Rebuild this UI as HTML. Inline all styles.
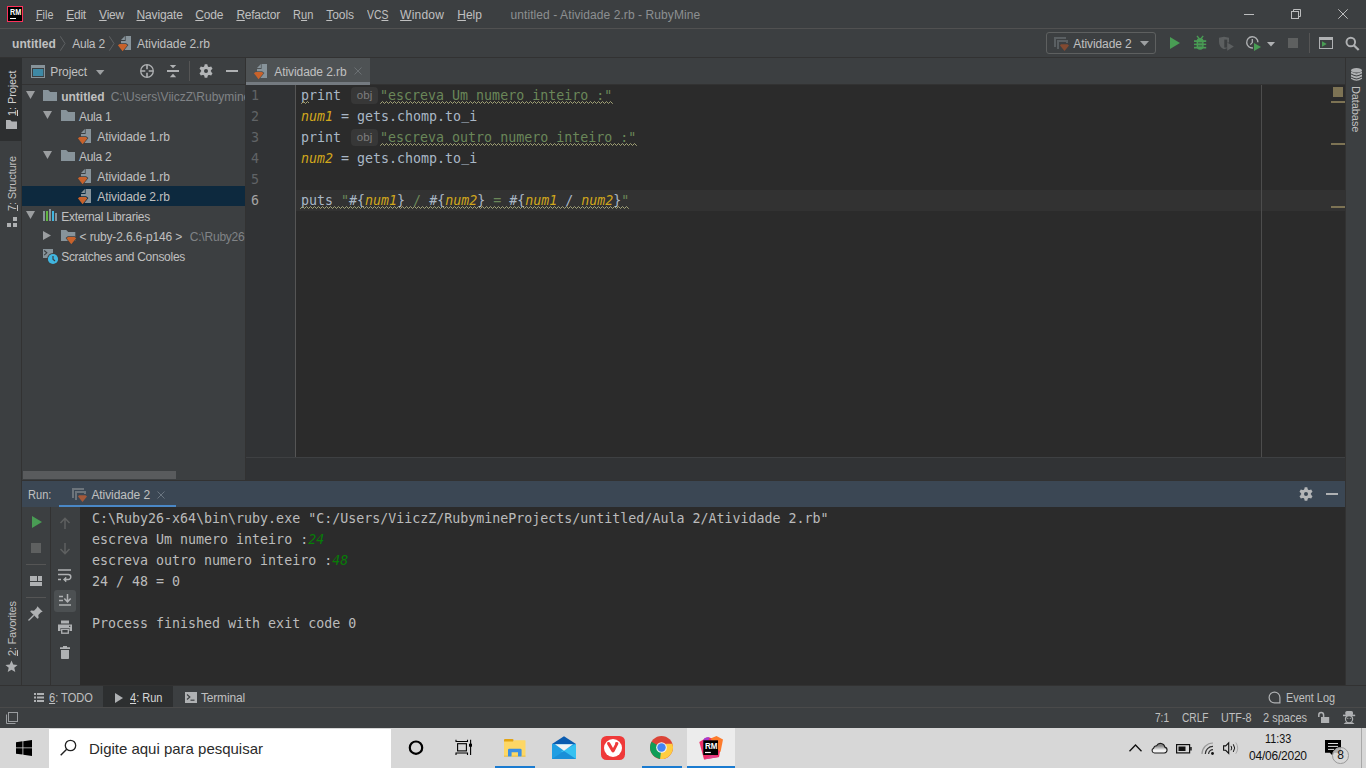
<!DOCTYPE html>
<html lang="pt-BR">
<head>
<meta charset="utf-8">
<title>untitled - Atividade 2.rb - RubyMine</title>
<style>
*{box-sizing:border-box;margin:0;padding:0}
html,body{width:1366px;height:768px;overflow:hidden;background:#3c3f41}
body{position:relative;font-family:"Liberation Sans",sans-serif;font-size:12px;color:#c0c0c0}
.a{position:absolute}
.t{position:absolute;white-space:nowrap;line-height:16px;height:16px}
.m{font-family:"DejaVu Sans Mono","Liberation Mono",monospace;font-size:13.3px;white-space:pre}
u{text-decoration:underline;text-underline-offset:1px}
svg{position:absolute;overflow:visible}
/* ---------- frames ---------- */
#menubar{left:0;top:0;width:1366px;height:28px;background:#3c3f41}
#menuline{left:0;top:28px;width:1366px;height:1px;background:#515151}
#navbar{left:0;top:29px;width:1366px;height:28px;background:#3c3f41}
#navline{left:0;top:57px;width:1366px;height:1px;background:#323232}
#lstripe{left:0;top:58px;width:22px;height:627px;background:#3c3f41;border-right:1px solid #323232}
#rstripe{left:1345px;top:58px;width:21px;height:627px;background:#3c3f41;border-left:1px solid #323232}
#proj{left:22px;top:58px;width:223px;height:422px;background:#3c3f41}
#projhead{left:22px;top:58px;width:223px;height:27px;background:#3c3f41;border-bottom:1px solid #323232}
#projsplit{left:245px;top:58px;width:1px;height:422px;background:#323232}
#tabs{left:246px;top:58px;width:1099px;height:27px;background:#3c3f41}
#tabsel{left:246px;top:58px;width:124px;height:27px;background:#4e5254;border-bottom:3px solid #747a80}
#tabline{left:370px;top:84px;width:975px;height:1px;background:#323232}
#editor{left:246px;top:85px;width:1099px;height:372px;background:#2b2b2b}
#gutter{left:246px;top:85px;width:49px;height:372px;background:#313335}
#gutline{left:295px;top:85px;width:1px;height:372px;background:#555555}
#curline{left:296px;top:190px;width:1049px;height:21px;background:#323232}
#rmargin{left:1261px;top:85px;width:1px;height:372px;background:#4d4d4d}
#edbottom{left:246px;top:457px;width:1099px;height:24px;background:#313335;border-top:1px solid #3e4042}
#runhead{left:22px;top:481px;width:1323px;height:26px;background:#3b4754}
#runul{left:59px;top:505px;width:117px;height:3px;background:#4a88c7}
#runtb1{left:22px;top:507px;width:28px;height:178px;background:#3c3f41}
#runtbsep{left:50px;top:507px;width:1px;height:178px;background:#323232}
#runtb2{left:51px;top:507px;width:29px;height:178px;background:#3c3f41}
#console{left:80px;top:507px;width:1265px;height:178px;background:#2b2b2b}
#bstripe{left:0;top:685px;width:1366px;height:22px;background:#3c3f41;border-top:1px solid #323232}
#status{left:0;top:707px;width:1366px;height:21px;background:#3c3f41;border-top:1px solid #4a4a4a}
#taskbar{left:0;top:728px;width:1366px;height:40px;background:#d7d7d7}
#search{left:49px;top:729px;width:342px;height:39px;background:#ffffff}
</style>
</head>
<body>
<div class="a" id="menubar"></div><div class="a" id="menuline"></div>
<div class="a" id="navbar"></div><div class="a" id="navline"></div>
<div class="a" id="lstripe"></div><div class="a" id="rstripe"></div>
<div class="a" id="proj"></div><div class="a" id="projhead"></div><div class="a" id="projsplit"></div>
<div class="a" id="tabs"></div><div class="a" id="tabline"></div><div class="a" id="tabsel"></div>
<div class="a" id="editor"></div><div class="a" id="gutter"></div><div class="a" id="gutline"></div>
<div class="a" id="curline"></div><div class="a" id="rmargin"></div>
<div class="a" id="edbottom"></div>
<div class="a" id="runhead"></div><div class="a" id="runul"></div>
<div class="a" id="runtb1"></div><div class="a" id="runtbsep"></div><div class="a" id="runtb2"></div>
<div class="a" id="console"></div>
<div class="a" id="bstripe"></div><div class="a" id="status"></div>
<div class="a" id="taskbar"></div><div class="a" id="search"></div>
<svg width="0" height="0" style="left:0;top:0">
<defs>
<symbol id="rbfile" viewBox="0 0 14 16" overflow="visible">
<path d="M3 4L6.9 0V4Z" fill="#87939a"/>
<path d="M7.6 0H13V14H3V5H7.6Z" fill="#87939a"/>
<path d="M1.6 8H7.9L9.4 9.2L4.6 15.2L-0.1 9.2Z" fill="#c8622b" stroke="var(--ibg,#3c3f41)" stroke-width="1.4" paint-order="stroke" stroke-linejoin="miter"/>
</symbol>
<symbol id="folder" viewBox="0 0 14 11" overflow="visible">
<path d="M0 0H5.2L7.2 2H14V11H0Z" fill="#87939a"/>
</symbol>
<symbol id="arrd" viewBox="0 0 9 8" overflow="visible"><path d="M0 0H9L4.5 8Z" fill="#9b9ea0"/></symbol>
<symbol id="arrr" viewBox="0 0 8 9" overflow="visible"><path d="M0 0L8 4.5L0 9Z" fill="#9b9ea0"/></symbol>
<symbol id="gear" viewBox="-7 -7 14 14" overflow="visible">
<g fill="#b3b5b7"><circle r="4.800"/>
<path id="gt" d="M-1.900 -4L-1.300 -6.750H1.300L1.900 -4V4L1.300 6.750H-1.300L-1.900 4Z"/>
<path d="M-1.900 -4L-1.300 -6.750H1.300L1.900 -4V4L1.300 6.750H-1.300L-1.900 4Z" transform="rotate(60)"/>
<path d="M-1.900 -4L-1.300 -6.750H1.300L1.900 -4V4L1.300 6.750H-1.300L-1.900 4Z" transform="rotate(120)"/></g>
<circle r="2" fill="var(--ibg,#3c3f41)"/>
</symbol>
<symbol id="runcfg" viewBox="0 0 15 14" overflow="visible">
<path d="M0 0H12V2H2V10H0Z" fill="var(--c1,#6c747b)"/>
<path d="M3 3H14V6H12V5H5V12H3Z" fill="var(--c1,#6c747b)"/>
<path d="M7 7.200H13.500L15 8.500L10.500 14L6 8.500Z" fill="var(--c2,#a4593a)"/>
</symbol>
<pattern id="wave" width="4" height="3" patternUnits="userSpaceOnUse"><path d="M-1.500 0.500L0.500 2.500L2.500 0.500L4.500 2.500L6.500 0.500" fill="none" stroke="#a3a376" stroke-width="1"/></pattern>
</defs>
</svg>
<!-- RM logo -->
<div class="a" style="left:7px;top:6px;width:16px;height:16px;background:#000;border:1px solid #fc315b"></div>
<span class="t" style="left:9.700px;top:7px;font-size:8.400px;font-weight:bold;color:#fff;line-height:10px;height:10px;transform-origin:0 0;transform:scaleX(0.860)">RM</span>
<div class="a" style="left:10px;top:18px;width:6px;height:1px;background:#fff"></div>
<!-- window controls -->
<div class="a" style="left:1244px;top:14px;width:10px;height:1px;background:#bcbdbe"></div>
<svg style="left:1291px;top:9px" width="10" height="10" viewBox="0 0 10 10"><path d="M2.5 2.5V0.5H9.5V7.5H7.5" fill="none" stroke="#bcbdbe" stroke-width="1"/><rect x="0.5" y="2.5" width="7" height="7" fill="none" stroke="#bcbdbe" stroke-width="1"/></svg>
<svg style="left:1338px;top:9px" width="10" height="10" viewBox="0 0 10 10"><path d="M0.3 0.3L9.7 9.7M9.7 0.3L0.3 9.7" stroke="#bcbdbe" stroke-width="1" fill="none"/></svg>

<svg style="left:60px;top:36px" width="6" height="15" viewBox="0 0 6 15"><path d="M0.300 0.300L5 7.500L0.300 14.700" fill="none" stroke="#5e6163" stroke-width="1"/></svg>
<svg style="left:109px;top:36px" width="6" height="15" viewBox="0 0 6 15"><path d="M0.300 0.300L5 7.500L0.300 14.700" fill="none" stroke="#5e6163" stroke-width="1"/></svg>
<svg style="left:118px;top:36px" width="14" height="16"><use href="#rbfile"/></svg>
<!-- run config combo -->
<div class="a" style="left:1046px;top:32px;width:110px;height:22px;border:1px solid #5e6060;border-radius:3px"></div>
<svg style="left:1054px;top:37px;--c1:#5a5f62;--c2:#824a31" width="15" height="14"><use href="#runcfg"/></svg>
<svg style="left:1140px;top:41px" width="9" height="5" viewBox="0 0 9 5"><path d="M0 0H9L4.500 5Z" fill="#9da0a2"/></svg>
<!-- run -->
<svg style="left:1170px;top:37px" width="10" height="12" viewBox="0 0 10 12"><path d="M0 0L10 6L0 12Z" fill="#499c54"/></svg>
<!-- debug bug -->
<svg style="left:1194px;top:36px" width="12" height="14" viewBox="0 0 12 14"><g fill="#499c54"><rect x="2.600" y="2" width="7" height="11.700" rx="3.400"/><rect x="0" y="4.200" width="12.200" height="1.800"/><rect x="0" y="7.600" width="12.200" height="1.500"/><rect x="0" y="10.800" width="12.200" height="1.700"/></g><path d="M3 0L5.300 2.700M9.200 0L6.900 2.700" stroke="#499c54" stroke-width="1.300" fill="none"/><path d="M4 6.800H8.200M4 9.900H8.200" stroke="#3c3f41" stroke-width="0.800"/></svg>
<!-- coverage disabled -->
<svg style="left:1219px;top:36px" width="16" height="15" viewBox="0 0 16 15"><path d="M0 1.700L5 0.700L10 1.700V6.500H8.200V12Q6.500 13 5 13.300Q0 11 0 6Z" fill="#5c5f60"/><rect x="5.300" y="3.600" width="2.900" height="8" fill="#3c3f41"/><path d="M8.200 6.400L14.800 10.600L8.200 14.800Z" fill="#5c5f60"/></svg>
<!-- profile -->
<svg style="left:1246px;top:36px" width="16" height="15" viewBox="0 0 16 15"><path d="M7 11.900A5.600 5.600 0 1 1 11.900 6.300" fill="none" stroke="#afb1b3" stroke-width="1.400"/><path d="M6.300 3V6.600L4.300 8.600" fill="none" stroke="#afb1b3" stroke-width="1.300"/><path d="M8 7L15 11L8 15Z" fill="#499c54"/></svg>
<svg style="left:1267px;top:42px" width="8" height="5" viewBox="0 0 8 5"><path d="M0 0H8L4 4.500Z" fill="#afb1b3"/></svg>
<div class="a" style="left:1288px;top:38px;width:10px;height:10px;background:#5e6060"></div>
<div class="a" style="left:1309px;top:33px;width:1px;height:20px;background:#555555"></div>
<svg style="left:1319px;top:37px" width="14" height="12" viewBox="0 0 14 12"><path d="M0 0H14V12H0ZM1 3V11H13V3Z" fill="#afb1b3" fill-rule="evenodd"/><path d="M3 4.300L7.700 7L3 9.800Z" fill="#499c54"/></svg>
<svg style="left:1345px;top:36px" width="15" height="15" viewBox="0 0 15 15"><circle cx="5.800" cy="6" r="4.300" fill="none" stroke="#afb1b3" stroke-width="1.900"/><path d="M8.800 9.200L13.700 14" stroke="#afb1b3" stroke-width="2.200" fill="none"/></svg>

<!-- left stripe -->
<div class="a" style="left:0;top:58px;width:22px;height:83px;background:#2d2f30"></div>
<svg style="left:6px;top:120px" width="11" height="9" viewBox="0 0 11 9"><path d="M0 0H4.2L5.7 1.5H11V9H0Z" fill="#afb1b3"/></svg>
<svg style="left:7px;top:217px" width="10" height="10" viewBox="0 0 10 10"><path d="M6 0H10V4H6ZM0 6H4V10H0ZM6 6H10V10H6Z" fill="#afb1b3"/></svg>
<svg style="left:5px;top:660px" width="13" height="13" viewBox="0 0 24 24"><path d="M12 1l3.2 7.4 8 .7-6.1 5.3 1.9 7.9L12 18.100l-7 4.200 1.900-7.900L.8 9.100l8-.700z" fill="#afb1b3"/></svg>
<!-- header icons -->
<svg style="left:31px;top:65px" width="14" height="13" viewBox="0 0 14 13"><path d="M0 0H14V13H0ZM1 3V12H13V3Z" fill="#87939a" fill-rule="evenodd"/><rect x="2" y="4" width="10.300" height="7" fill="#3e89a5"/></svg>
<svg style="left:96px;top:70px" width="8" height="5" viewBox="0 0 8 5"><path d="M0 0H8.400L4.200 5Z" fill="#9da0a2"/></svg>
<svg style="left:140px;top:64px" width="14" height="14" viewBox="0 0 14 14"><circle cx="7" cy="7" r="6.300" fill="none" stroke="#afb1b3" stroke-width="1.300"/><path d="M7 1V5.300M7 8.700V13M1 7H5.300M8.700 7H13" stroke="#afb1b3" stroke-width="1.600" fill="none"/></svg>
<svg style="left:167px;top:65px" width="12" height="13" viewBox="0 0 12 13"><path d="M0 5H12V7H0ZM2.800 0H9.200L6 3.200ZM6 8.800L9.200 12.200H2.800Z" fill="#afb1b3"/></svg>
<div class="a" style="left:189px;top:61px;width:1px;height:20px;background:#555555"></div>
<svg style="left:199px;top:64px" width="14" height="14"><use href="#gear"/></svg>
<div class="a" style="left:226px;top:70px;width:12px;height:2px;background:#afb1b3"></div>
<!-- tree -->
<div class="a" style="left:22px;top:186px;width:223px;height:20px;background:#0d293e"></div>
<svg style="left:26px;top:91px" width="9" height="8"><use href="#arrd"/></svg>
<svg style="left:43px;top:90px" width="14" height="11"><use href="#folder"/></svg>
<svg style="left:43px;top:111px" width="9" height="8"><use href="#arrd"/></svg>
<svg style="left:61px;top:110px" width="14" height="11"><use href="#folder"/></svg>
<svg style="left:78px;top:129px" width="14" height="16"><use href="#rbfile"/></svg>
<svg style="left:43px;top:151px" width="9" height="8"><use href="#arrd"/></svg>
<svg style="left:61px;top:150px" width="14" height="11"><use href="#folder"/></svg>
<svg style="left:78px;top:169px" width="14" height="16"><use href="#rbfile"/></svg>
<svg style="left:78px;top:189px;--ibg:#0d293e" width="14" height="16"><use href="#rbfile"/></svg>
<svg style="left:26px;top:211px" width="9" height="8"><use href="#arrd"/></svg>
<svg style="left:43px;top:209px" width="15" height="12" viewBox="0 0 15 12"><path d="M0 2H2V12H0ZM6 0H8V12H6ZM12 4H14V12H12Z" fill="#87939a"/><rect x="3" y="2" width="2" height="10" fill="#62b543"/><rect x="9" y="2" width="2" height="10" fill="#40b6e0"/></svg>
<svg style="left:43px;top:231px" width="8" height="9"><use href="#arrr"/></svg>
<svg style="left:61px;top:230px" width="16" height="14" viewBox="0 0 16 14"><path d="M0 0H5.200L7.200 2H14.300V11H0Z" fill="#87939a"/><path d="M7 7H13.500L15.200 8.200L10.300 14.200L5.500 8.200Z" fill="#c8622b" stroke="#3c3f41" stroke-width="1.300" paint-order="stroke"/></svg>
<svg style="left:43px;top:249px" width="16" height="16" viewBox="0 0 16 16"><rect x="0" y="0" width="10" height="9" fill="#87939a"/><path d="M1.200 1.500L3.800 3.800L1.200 6.100" fill="none" stroke="#3c3f41" stroke-width="1.100"/><circle cx="10" cy="10" r="5.900" fill="#3c3f41"/><circle cx="10" cy="10" r="5.100" fill="#40b6e0"/><path d="M10 7V10.300L12 12" fill="none" stroke="#3c3f41" stroke-width="1.200"/></svg>
<div class="a" style="left:23px;top:471px;width:153px;height:8px;background:#595b5d"></div>

<style>
.ln{position:absolute;left:246px;width:20px;text-align:left;padding-left:5px;color:#606366;height:21px;line-height:21px}
.cl{position:absolute;left:301px;height:21px;line-height:21px;color:#a9b7c6}
.s{color:#6a8759}.v{color:#d1a71c;font-style:italic}
.hint{display:inline-block;width:27px;height:17px;margin:0 2px 0 2px;vertical-align:top;margin-top:2px;border-radius:4px;background:#373737;color:#7e7e7e;font-family:"Liberation Sans",sans-serif;font-size:11.5px;line-height:16px;text-align:center;font-style:normal}
</style>
<div class="m ln" style="top:85px">1</div>
<div class="m ln" style="top:106px">2</div>
<div class="m ln" style="top:127px">3</div>
<div class="m ln" style="top:148px">4</div>
<div class="m ln" style="top:169px">5</div>
<div class="m ln" style="top:190px;color:#a4a3a3">6</div>
<div class="m cl" style="top:85px">print <span class="hint">obj</span><span class="s">"escreva Um numero inteiro :"</span></div>
<div class="m cl" style="top:106px"><span class="v">num1</span> = gets.chomp.to<span style="position:relative;top:-2px">_</span>i</div>
<div class="m cl" style="top:127px">print <span class="hint">obj</span><span class="s">"escreva outro numero inteiro :"</span></div>
<div class="m cl" style="top:148px"><span class="v">num2</span> = gets.chomp.to<span style="position:relative;top:-2px">_</span>i</div>
<div class="m cl" style="top:190px"><span>puts <span class="s">"</span>#{<span class="v">num1</span>}<span class="s"> / </span>#{<span class="v">num2</span>}<span class="s"> = </span>#{<span class="v">num1</span> / <span class="v">num2</span>}<span class="s">"</span></span></div>
<!-- tab icon + close -->
<svg style="left:254px;top:64px;--ibg:#4e5254" width="14" height="16" viewBox="0 0 14 16"><use href="#rbfile"/></svg>
<svg style="left:354px;top:67px" width="8" height="8" viewBox="0 0 8 8"><path d="M0.5 0.5l7 7M7.5 0.5l-7 7" stroke="#6b7073" stroke-width="1" fill="none"/></svg>
<!-- error stripe -->
<div class="a" style="left:1333px;top:87px;width:10px;height:10px;background:#7d7354"></div>
<div class="a" style="left:1331px;top:101px;width:14px;height:2px;background:#7d7354"></div>
<div class="a" style="left:1331px;top:143px;width:14px;height:2px;background:#7d7354"></div>
<div class="a" style="left:1331px;top:206px;width:14px;height:2px;background:#7d7354"></div>
<svg style="left:1351px;top:68px" width="11" height="13" viewBox="0 0 11 13"><g fill="#afb1b3"><ellipse cx="5.500" cy="2.300" rx="5.500" ry="2.300"/><path d="M0 3.600Q5.500 7.200 11 3.600V5.600Q5.500 9.200 0 5.600ZM0 6.600Q5.500 10.200 11 6.600V8.600Q5.500 12.200 0 8.600ZM0 9.600Q5.500 13.200 11 9.600V10.700Q5.500 15 0 10.700Z"/></g></svg>
<svg style="left:301px;top:101px" width="8" height="3"><rect width="8" height="3" fill="url(#wave)"/></svg>
<svg style="left:380px;top:101px" width="233" height="3"><rect width="233" height="3" fill="url(#wave)"/></svg>
<svg style="left:380px;top:143px" width="257" height="3"><rect width="257" height="3" fill="url(#wave)"/></svg>
<svg style="left:300px;top:206px" width="329" height="3"><rect width="329" height="3" fill="url(#wave)"/></svg>
<div class="a" style="left:22px;top:480px;width:1323px;height:1px;background:#323232"></div>

<style>
.co{position:absolute;left:92px;height:21px;line-height:21px;color:#bbbbbb}
.in{color:#077d07;font-style:italic}
</style>
<div class="m co" style="top:508px">C:\Ruby26-x64\bin\ruby.exe "C:/Users/ViiczZ/RubymineProjects/untitled/Aula 2/Atividade 2.rb"</div>
<div class="m co" style="top:529px">escreva Um numero inteiro :<span class="in">24</span></div>
<div class="m co" style="top:550px">escreva outro numero inteiro :<span class="in">48</span></div>
<div class="m co" style="top:571px">24 / 48 = 0</div>
<div class="m co" style="top:613px">Process finished with exit code 0</div>
<!-- run header -->
<svg style="left:72px;top:488px" width="15" height="14"><use href="#runcfg"/></svg>
<svg style="left:157px;top:491px" width="8" height="8" viewBox="0 0 8 8"><path d="M0.500 0.500l7 7M7.500 0.500l-7 7" stroke="#6a7580" stroke-width="1" fill="none"/></svg>
<svg style="left:1299px;top:487px;--ibg:#3b4754" width="14" height="14"><use href="#gear"/></svg>
<div class="a" style="left:1326px;top:493px;width:12px;height:2px;background:#afb1b3"></div>
<!-- col 1 -->
<svg style="left:32px;top:516px" width="10" height="12" viewBox="0 0 10 12"><path d="M0 0L10 6L0 12Z" fill="#499c54"/></svg>
<div class="a" style="left:31px;top:543px;width:10px;height:10px;background:#5e6060"></div>
<div class="a" style="left:26px;top:564px;width:20px;height:1px;background:#555555"></div>
<svg style="left:30px;top:576px" width="12" height="10" viewBox="0 0 12 10"><path d="M0 0H7V5H0ZM8 0H12V5H8ZM0 6H12V10H0Z" fill="#afb1b3"/></svg>
<div class="a" style="left:26px;top:597px;width:20px;height:1px;background:#555555"></div>
<svg style="left:28px;top:606px" width="15" height="15" viewBox="0 0 15 15"><path d="M9.300 0.300L14.700 5.700L13 6.300L10.300 9L10.600 12L9.500 12.800L2.200 5.500L3 4.400L6 4.700L8.700 2Z" fill="#afb1b3"/><path d="M5.800 9.200L0.500 14.500" stroke="#afb1b3" stroke-width="1.300"/></svg>
<!-- col 2 -->
<svg style="left:60px;top:517px" width="10" height="12" viewBox="0 0 10 12"><path d="M5 12V1.500M0.500 6L5 1.300L9.500 6" fill="none" stroke="#5e6060" stroke-width="1.500"/></svg>
<svg style="left:60px;top:543px" width="10" height="12" viewBox="0 0 10 12"><path d="M5 0V10.500M0.500 6L5 10.700L9.500 6" fill="none" stroke="#5e6060" stroke-width="1.500"/></svg>
<svg style="left:58px;top:569px" width="13" height="14" viewBox="0 0 13 14"><path d="M0 1H13M0 5.500H10.300A2.500 2.500 0 0 1 10.300 10.500H6.500M0 10.500H3" fill="none" stroke="#afb1b3" stroke-width="1.500"/><path d="M8 8L5.300 10.500L8 13Z" fill="#afb1b3" stroke="#afb1b3" stroke-width="0.600"/></svg>
<div class="a" style="left:54px;top:590px;width:22px;height:22px;border-radius:3px;background:#4c5052"></div>
<svg style="left:59px;top:594px" width="12" height="12" viewBox="0 0 12 12"><path d="M0 2.500H4M0 6.500H4M0 11H12" fill="none" stroke="#afb1b3" stroke-width="1.500"/><path d="M8.500 0V7.500M5.300 4.500L8.500 7.800L11.700 4.500" fill="none" stroke="#afb1b3" stroke-width="1.500"/></svg>
<svg style="left:58px;top:620px" width="14" height="14" viewBox="0 0 14 14"><path d="M3 0.500H11V3.500H3Z" fill="#afb1b3"/><path d="M0 4.500H14V11H11.500V8H2.500V11H0Z" fill="#afb1b3"/><rect x="3.700" y="9.300" width="6.600" height="3.900" fill="none" stroke="#afb1b3" stroke-width="1.300"/><rect x="11" y="5.700" width="1.300" height="1.300" fill="#3c3f41"/></svg>
<svg style="left:60px;top:646px" width="10" height="13" viewBox="0 0 10 13"><path d="M3 0H7V1.300H10V3H0V1.300H3ZM1 4H9V12.200Q9 13 8.200 13H1.800Q1 13 1 12.200Z" fill="#afb1b3"/></svg>

<div class="a" style="left:103px;top:686px;width:70px;height:21px;background:#2d2f30"></div>
<svg style="left:34px;top:693px" width="10" height="9" viewBox="0 0 10 9"><path d="M0 0H2V2H0ZM3 0H10V2H3ZM0 3.500H2V5.500H0ZM3 3.500H10V5.500H3ZM0 7H2V9H0ZM3 7H10V9H3Z" fill="#afb1b3"/></svg>
<svg style="left:115px;top:693px" width="8" height="10" viewBox="0 0 8 10"><path d="M0 0L8 5L0 10Z" fill="#afb1b3"/></svg>
<svg style="left:185px;top:692px" width="12" height="11" viewBox="0 0 12 11"><rect width="12" height="11" fill="#afb1b3"/><path d="M2 2.500L4.800 5L2 7.500" fill="none" stroke="#3c3f41" stroke-width="1.200"/><path d="M5.500 8.200H9.500" stroke="#3c3f41" stroke-width="1.200"/></svg>
<svg style="left:1268px;top:691px" width="13" height="13" viewBox="0 0 13 13"><path d="M6.500 1.100A5.400 5.400 0 1 0 6.500 11.900H11.900V6.500A5.400 5.400 0 0 0 6.500 1.100Z" fill="none" stroke="#afb1b3" stroke-width="1.200"/></svg>
<!-- status -->
<svg style="left:6px;top:712px" width="12" height="12" viewBox="0 0 12 12"><path d="M0.500 2.500V11.500H9.500" fill="none" stroke="#9a9da0" stroke-width="1"/><rect x="2.500" y="0.500" width="9" height="9" fill="none" stroke="#9a9da0" stroke-width="1"/></svg>
<svg style="left:1318px;top:711px" width="12" height="13" viewBox="0 0 12 13"><path d="M0.800 6V3.900A2.400 2.400 0 0 1 5.600 3.900V6.500" fill="none" stroke="#afb1b3" stroke-width="1.500"/><rect x="3" y="6" width="8.200" height="6" fill="#afb1b3"/></svg>
<svg style="left:1343px;top:711px" width="13" height="13" viewBox="0 0 13 13"><g fill="#afb1b3"><rect x="2.300" y="0" width="7.700" height="4.500" rx="1.600"/><rect x="0" y="3.800" width="12.100" height="1.300"/><circle cx="6.050" cy="8" r="4.200"/><path d="M0.600 13L2.600 11.200H9.500L11.500 13Z"/></g><ellipse cx="6.050" cy="8.300" rx="2.900" ry="3" fill="#3c3f41"/><circle cx="4.800" cy="7.300" r="0.600" fill="#afb1b3"/><circle cx="7.300" cy="7.300" r="0.600" fill="#afb1b3"/><rect x="0" y="3.800" width="12.100" height="1.300" fill="#afb1b3"/></svg>

<div class="a" style="left:687px;top:728px;width:48px;height:40px;background:#ececec"></div>
<div class="a" style="left:495px;top:766px;width:40px;height:2px;background:#1a7bd0"></div>
<div class="a" style="left:642px;top:766px;width:40px;height:2px;background:#1a7bd0"></div>
<div class="a" style="left:687px;top:766px;width:48px;height:2px;background:#1a7bd0"></div>
<div class="a" style="left:1361px;top:728px;width:1px;height:40px;background:#a8a8a8"></div>
<!-- windows logo -->
<svg style="left:16px;top:740px" width="16" height="16" viewBox="0 0 16 16"><path d="M0 2.200L6.500 1.300V7.500H0ZM7.300 1.200L16 0V7.500H7.300ZM0 8.300H6.500V14.600L0 13.700ZM7.300 8.300H16V16L7.300 14.800Z" fill="#000"/></svg>
<!-- search icon -->
<svg style="left:60px;top:739px" width="17" height="17" viewBox="0 0 17 17"><circle cx="10.500" cy="6.500" r="5.200" fill="none" stroke="#222" stroke-width="1.300"/><path d="M6.700 10.300L0.700 16.300" stroke="#222" stroke-width="1.400"/></svg>
<!-- cortana -->
<svg style="left:408px;top:740px" width="16" height="16" viewBox="0 0 16 16"><circle cx="8" cy="7.700" r="6.200" fill="none" stroke="#000" stroke-width="2.200"/></svg>
<!-- task view -->
<svg style="left:455px;top:739px" width="18" height="17" viewBox="0 0 18 17"><g fill="none" stroke="#000" stroke-width="1.100"><rect x="2.600" y="4.700" width="8.800" height="7.200"/><path d="M1 0.700V2.500H12.500V0.700M1 16V14H12.500V16M15.600 0.700V16"/></g><rect x="14" y="4.700" width="3" height="3" fill="#000"/></svg>
<!-- explorer -->
<svg style="left:504px;top:739px" width="22" height="18" viewBox="0 0 22 18"><path d="M0 1Q0 0 1 0H8.500Q9.500 0 9.500 1V3H0Z" fill="#e3a412"/><path d="M0 2.500H9L10.500 1.200H21Q21.500 1.200 21.500 2V17.500H0Z" fill="#fdd765"/><path d="M4 11Q4 9.700 5.300 9.700H16.300Q17.600 9.700 17.600 11V17.500H14V13.300H7.600V17.500H4Z" fill="#3b8fe4"/><path d="M0 16.800H4V17.500H0ZM7.600 16.800H14V17.500H7.600ZM17.600 16.800H21.500V17.500H17.600Z" fill="#e5b437"/></svg>
<!-- mail -->
<svg style="left:552px;top:736px" width="24" height="23" viewBox="0 0 24 23"><path d="M0 8L12 0.300L24 8V9H0Z" fill="#0b5cb0"/><path d="M0 8H24V23H0Z" fill="#1f9ee3"/><path d="M24 8V23H21L9 15.500Z" fill="#35c1f1"/><path d="M0 23L12 15L24 23Z" fill="#1a8fd8"/><path d="M3 8.300H21L12 14.800Z" fill="#f4f4f4"/></svg>
<!-- vivaldi -->
<svg style="left:601px;top:736px" width="24" height="24" viewBox="0 0 24 24"><rect width="24" height="24" rx="5.500" fill="#ef3939"/><circle cx="12" cy="12" r="9" fill="#fff"/><path d="M6.200 8.200Q5.500 6.500 7 6Q8.500 5.700 9.300 7.200L12 12L14.200 8Q13.500 6 15.800 5.900Q18 6.200 17.200 8.300L13.500 15.500Q12 17.500 10.500 15.500Z" fill="#ef3939"/></svg>
<!-- chrome -->
<svg style="left:650px;top:736px" width="23" height="23" viewBox="-12 -12 24 24"><circle r="12" fill="#db4437"/><path d="M0 0L-10.400 -6A12 12 0 0 0 -1.500 11.900L6 0Z" fill="#0f9d58"/><path d="M0 0L5.200 -4H11.300A12 12 0 0 1 -1.500 11.900Z" fill="#ffcd40"/><circle r="5.600" fill="#f1f1f1"/><circle r="4.400" fill="#4285f4"/></svg>
<!-- rubymine -->
<svg style="left:698px;top:735px" width="26" height="26" viewBox="0 0 26 26"><path d="M1.300 7L9 2.300L24 5L21 22L6 24.600Z" fill="#ee2f68"/><path d="M12.500 3.500L18.500 1L25 4.500L22.500 17L17 12Z" fill="#fd7b2c"/><path d="M6.500 3L11.500 2L10 6.500L4.500 7.500Z" fill="#a63cd0"/><path d="M6 24.600L14 20L21 22Z" fill="#e0408a"/><rect x="5.300" y="5.300" width="14.700" height="14.700" fill="#000"/><path d="M7 17.500H12.800" stroke="#fff" stroke-width="1.200"/></svg>
<span class="t" style="left:704.500px;top:741px;font-size:9.600px;font-weight:bold;color:#fff;line-height:10px;height:10px;transform-origin:0 0;transform:scaleX(0.840)">RM</span>
<!-- tray -->
<svg style="left:1129px;top:744px" width="13" height="8" viewBox="0 0 13 8"><path d="M0.500 7.300L6.500 1L12.500 7.300" fill="none" stroke="#111" stroke-width="1.300"/></svg>
<svg style="left:1150.500px;top:741.500px" width="17" height="12" viewBox="0 0 17 12"><defs><linearGradient id="cg" x1="0" y1="0" x2="0" y2="1"><stop offset="0.250" stop-color="#858585"/><stop offset="0.700" stop-color="#f2f2f2"/></linearGradient></defs><path d="M3.600 11H13.300A3 3 0 0 0 13.800 5.100A4.400 4.400 0 0 0 5.600 3.700A3.200 3.200 0 0 0 2.600 6.200A2.500 2.500 0 0 0 3.600 11Z" fill="url(#cg)" stroke="#1a1a1a" stroke-width="1.100"/></svg>
<svg style="left:1176px;top:744px" width="16" height="10" viewBox="0 0 16 10"><rect x="0.600" y="0.600" width="13" height="8.300" fill="none" stroke="#111" stroke-width="1.200"/><rect x="2.500" y="2.500" width="7" height="4.500" fill="#111"/><rect x="14.200" y="3" width="1.500" height="3.500" fill="#111"/></svg>
<svg style="left:1201px;top:742px" width="14" height="13" viewBox="0 0 14 13"><g fill="none" stroke-width="1.200"><path d="M1 12A11 11 0 0 1 12 1" stroke="#999"/><path d="M4.300 12A7.700 7.700 0 0 1 12 4.300" stroke="#333"/><path d="M7.600 12A4.400 4.400 0 0 1 12 7.600" stroke="#333"/></g><circle cx="11.500" cy="11.500" r="1.400" fill="#111"/></svg>
<svg style="left:1223px;top:742px" width="17" height="13" viewBox="0 0 17 13"><path d="M0.600 3.900H2.700L5.700 0.900V11.300L2.700 8.300H0.600Z" fill="none" stroke="#111" stroke-width="1.100"/><g fill="none" stroke-width="1"><path d="M8 3.900Q9.500 6.100 8 8.300" stroke="#111"/><path d="M10.300 2.300Q13 6.100 10.300 9.900" stroke="#111"/><path d="M12.800 0.500Q16.600 6.100 12.800 11.700" stroke="#aaa"/></g></svg>
<svg style="left:1325px;top:740px" width="17" height="16" viewBox="0 0 17 16"><path d="M0 0H16V12.700H9L7.500 15.500L4.800 12.700H0Z" fill="#000"/><path d="M3 3.500H13M3 6.400H13M3 9.400H9" stroke="#dcdcdc" stroke-width="1"/></svg>
<div class="a" style="left:1332.200px;top:747px;width:16.600px;height:16.600px;border-radius:50%;background:rgba(216,216,216,0.800);border:1px solid #9a9a9a"></div>

<span class="t" style="left:35.6px;top:6.5px;font-size:12px;transform-origin:0 50%;transform:scaleX(0.8988);color:#c0c0c0;"><u>F</u>ile</span>
<span class="t" style="left:66.2px;top:6.5px;font-size:12px;letter-spacing:-0.251px;color:#c0c0c0;"><u>E</u>dit</span>
<span class="t" style="left:99.1px;top:6.5px;font-size:12px;letter-spacing:-0.253px;color:#c0c0c0;"><u>V</u>iew</span>
<span class="t" style="left:136.5px;top:6.5px;font-size:12px;letter-spacing:-0.122px;color:#c0c0c0;"><u>N</u>avigate</span>
<span class="t" style="left:195.3px;top:6.5px;font-size:12px;letter-spacing:-0.201px;color:#c0c0c0;"><u>C</u>ode</span>
<span class="t" style="left:236.4px;top:6.5px;font-size:12px;letter-spacing:-0.232px;color:#c0c0c0;"><u>R</u>efactor</span>
<span class="t" style="left:293.4px;top:6.5px;font-size:12px;transform-origin:0 50%;transform:scaleX(0.9208);color:#c0c0c0;">R<u>u</u>n</span>
<span class="t" style="left:326.3px;top:6.5px;font-size:12px;letter-spacing:-0.063px;color:#c0c0c0;"><u>T</u>ools</span>
<span class="t" style="left:367.1px;top:6.5px;font-size:12px;transform-origin:0 50%;transform:scaleX(0.8668);color:#c0c0c0;">VC<u>S</u></span>
<span class="t" style="left:400.1px;top:6.5px;font-size:12px;letter-spacing:0.219px;color:#c0c0c0;"><u>W</u>indow</span>
<span class="t" style="left:457.3px;top:6.5px;font-size:12px;letter-spacing:-0.047px;color:#c0c0c0;"><u>H</u>elp</span>
<span class="t" style="left:510.5px;top:6.5px;font-size:12px;letter-spacing:0.084px;color:#8c8f91;">untitled - Atividade 2.rb - RubyMine</span>
<span class="t" style="left:12.1px;top:35.5px;font-size:12px;letter-spacing:0.059px;font-weight:bold;">untitled</span>
<span class="t" style="left:72.2px;top:35.5px;font-size:12px;letter-spacing:-0.222px;">Aula 2</span>
<span class="t" style="left:137.0px;top:35.5px;font-size:12px;letter-spacing:-0.028px;">Atividade 2.rb</span>
<span class="t" style="left:1073.3px;top:35.5px;font-size:12px;letter-spacing:-0.098px;">Atividade 2</span>
<span class="t" style="left:50.3px;top:63.5px;font-size:12px;letter-spacing:-0.094px;">Project</span>
<span class="t" style="left:61.2px;top:88.5px;font-size:12px;font-weight:bold;">untitled</span>
<span class="t" style="left:110.7px;top:88.5px;font-size:12px;letter-spacing:-0.009px;color:#808386;clip-path:inset(0 90.5px 0 0);">C:\Users\ViiczZ\RubymineProjects\untitled</span>
<span class="t" style="left:79.0px;top:108.5px;font-size:12px;letter-spacing:-0.289px;">Aula 1</span>
<span class="t" style="left:97.2px;top:128.5px;font-size:12px;letter-spacing:-0.056px;">Atividade 1.rb</span>
<span class="t" style="left:79.0px;top:148.5px;font-size:12px;letter-spacing:-0.289px;">Aula 2</span>
<span class="t" style="left:97.2px;top:168.5px;font-size:12px;letter-spacing:-0.056px;">Atividade 1.rb</span>
<span class="t" style="left:97.2px;top:188.5px;font-size:12px;letter-spacing:-0.056px;">Atividade 2.rb</span>
<span class="t" style="left:61.2px;top:208.5px;font-size:12px;letter-spacing:-0.254px;">External Libraries</span>
<span class="t" style="left:79.6px;top:228.5px;font-size:12px;letter-spacing:-0.153px;">&lt; ruby-2.6.6-p146 &gt;</span>
<span class="t" style="left:189.8px;top:228.5px;font-size:12px;letter-spacing:-0.219px;color:#808386;clip-path:inset(0 22px 0 0);">C:\Ruby26-x64</span>
<span class="t" style="left:61.2px;top:248.5px;font-size:12px;letter-spacing:-0.285px;">Scratches and Consoles</span>
<span class="t" style="left:274.3px;top:63.5px;font-size:12px;letter-spacing:-0.078px;">Atividade 2.rb</span>
<span class="t" style="left:28.4px;top:487.0px;font-size:12px;transform-origin:0 50%;transform:scaleX(0.9227);">Run:</span>
<span class="t" style="left:91.4px;top:487.0px;font-size:12px;letter-spacing:-0.070px;">Atividade 2</span>
<span class="t" style="left:49.0px;top:690.0px;font-size:12px;transform-origin:0 50%;transform:scaleX(0.9203);"><u>6</u>: TODO</span>
<span class="t" style="left:130.0px;top:690.0px;font-size:12px;transform-origin:0 50%;transform:scaleX(0.9187);color:#d8d8d8;"><u>4</u>: Run</span>
<span class="t" style="left:201.0px;top:690.0px;font-size:12px;letter-spacing:-0.182px;">Terminal</span>
<span class="t" style="left:1285.5px;top:690.0px;font-size:12px;transform-origin:0 50%;transform:scaleX(0.9066);">Event Log</span>
<span class="t" style="left:1154.5px;top:710.0px;font-size:12px;transform-origin:0 50%;transform:scaleX(0.8390);">7:1</span>
<span class="t" style="left:1181.5px;top:710.0px;font-size:12px;transform-origin:0 50%;transform:scaleX(0.8455);">CRLF</span>
<span class="t" style="left:1220.5px;top:710.0px;font-size:12px;transform-origin:0 50%;transform:scaleX(0.8971);">UTF-8</span>
<span class="t" style="left:1263.0px;top:710.0px;font-size:12px;transform-origin:0 50%;transform:scaleX(0.9161);">2 spaces</span>
<span class="t" style="left:89.0px;top:740.5px;font-size:15px;letter-spacing:-0.011px;color:#2b2b2b;height:20px;line-height:20px;margin-top:-2px;">Digite aqui para pesquisar</span>
<span class="t" style="left:1264.6px;top:730.7px;font-size:12px;transform-origin:0 50%;transform:scaleX(0.8991);color:#111;">11:33</span>
<span class="t" style="left:1249.0px;top:748.4px;font-size:12px;letter-spacing:-0.226px;color:#111;">04/06/2020</span>
<span class="t" style="left:1337.2px;top:746.6px;font-size:12px;color:#111;">8</span>
<span class="t" style="left:11.5px;top:115.9px;font-size:11px;transform-origin:0 0;transform:rotate(-90deg) translate(0,-8px);letter-spacing:-0.108px;color:#d0d0d0;"><u>1</u>: Project</span>
<span class="t" style="left:11.5px;top:211.0px;font-size:11px;transform-origin:0 0;transform:rotate(-90deg) translate(0,-8px);letter-spacing:-0.156px;"><u>7</u>: Structure</span>
<span class="t" style="left:11.5px;top:656.0px;font-size:11px;transform-origin:0 0;transform:rotate(-90deg) translate(0,-8px);letter-spacing:-0.232px;"><u>2</u>: Favorites</span>
<span class="t" style="left:1363.5px;top:85.9px;font-size:11px;transform-origin:0 0;transform:rotate(90deg);letter-spacing:-0.099px;">Database</span>
</body>
</html>
